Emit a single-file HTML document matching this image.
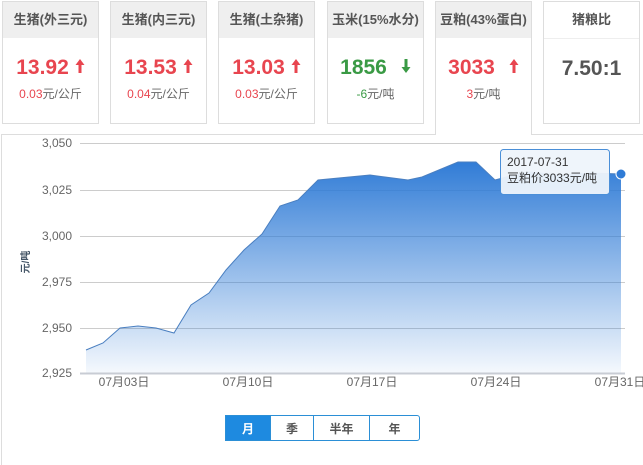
<!DOCTYPE html><html><head><meta charset="utf-8"><style>
body{margin:0;width:643px;height:450px;background:#fff;font-family:"Liberation Sans","Noto Sans CJK SC",sans-serif;position:relative;overflow:hidden}
.c{position:absolute;top:1px;width:97px;height:123px;border:1px solid #ddd;background:#fff;text-align:center;box-sizing:border-box}
.c .h{background:#efefef;height:36px;line-height:36px;font-size:13px;font-weight:bold;color:#555}
.c .v{margin-top:18px;font-size:21px;font-weight:bold;height:24px;line-height:24px}
.c .s{font-size:12px;color:#666;margin-top:5px}
.r{color:#e8454f}.g{color:#3a9a45}
.ar{display:inline-block;vertical-align:middle;margin-left:6px;margin-top:-4px}
.btn{position:absolute;top:415px;height:26px;line-height:26px;text-align:center;font-size:12px;font-weight:bold;color:#555;border:1px solid #2b8fd6;box-sizing:border-box}
</style></head><body>
<div class="c" style="left:2px"><div class="h">生猪(外三元)</div><div class="v r">13.92<svg class="ar" width="10" height="16"><path d="M5 1L0.5 7H3.5V15H6.5V7H9.5Z" fill="#e8454f"/></svg></div><div class="s"><span class="r">0.03</span>元/公斤</div></div>
<div class="c" style="left:110px"><div class="h">生猪(内三元)</div><div class="v r">13.53<svg class="ar" width="10" height="16"><path d="M5 1L0.5 7H3.5V15H6.5V7H9.5Z" fill="#e8454f"/></svg></div><div class="s"><span class="r">0.04</span>元/公斤</div></div>
<div class="c" style="left:218px"><div class="h">生猪(土杂猪)</div><div class="v r">13.03<svg class="ar" width="10" height="16"><path d="M5 1L0.5 7H3.5V15H6.5V7H9.5Z" fill="#e8454f"/></svg></div><div class="s"><span class="r">0.03</span>元/公斤</div></div>
<div class="c" style="left:327px"><div class="h">玉米(15%水分)</div><div class="v g">1856<svg class="ar" style="margin-left:14px" width="10" height="16"><path d="M5 15L0.5 9H3.5V1H6.5V9H9.5Z" fill="#3a9a45"/></svg></div><div class="s"><span class="g">-6</span>元/吨</div></div>
<div class="c" style="left:435px;height:134px;border-bottom:none"><div class="h">豆粕(43%蛋白)</div><div class="v r">3033<svg class="ar" style="margin-left:14px" width="10" height="16"><path d="M5 1L0.5 7H3.5V15H6.5V7H9.5Z" fill="#e8454f"/></svg></div><div class="s"><span class="r">3</span>元/吨</div></div>
<div class="c" style="left:543px"><div class="h" style="background:#fff;border-bottom:1px solid #eee">猪粮比</div><div class="v" style="color:#555">7.50:1</div></div>
<div style="position:absolute;left:1px;top:134px;width:434px;height:330px;border-top:1px solid #ddd;border-left:1px solid #ddd"></div>
<div style="position:absolute;left:532px;top:134px;width:111px;border-top:1px solid #ddd"></div>
<svg style="position:absolute;left:0;top:0" width="643" height="450">
<defs><linearGradient id="gr" x1="0" y1="160" x2="0" y2="375" gradientUnits="userSpaceOnUse"><stop offset="0" stop-color="#2f7bd6"/><stop offset="1" stop-color="#2f7bd6" stop-opacity="0.04"/></linearGradient></defs>
<g stroke="#ccc" stroke-width="1">
<line x1="80" x2="625" y1="143.5" y2="143.5"/><line x1="80" x2="625" y1="190.5" y2="190.5"/><line x1="80" x2="625" y1="236.5" y2="236.5"/><line x1="80" x2="625" y1="282.5" y2="282.5"/><line x1="80" x2="625" y1="328.5" y2="328.5"/></g>
<path d="M86,350 L103,343 L120,328 L138,326 L156,328 L174,333 L191,305 L209,293 L226,270 L244,250 L262,234 L280,206 L298,200 L318,180 L370,175 L385,177 L408,180 L422,177 L458,162 L476,162 L495,180 L510,176 L530,172 L560,175 L590,173 L621,174 L621,373 L86,373Z" fill="url(#gr)" stroke="none"/>
<path d="M86,350 L103,343 L120,328 L138,326 L156,328 L174,333 L191,305 L209,293 L226,270 L244,250 L262,234 L280,206 L298,200 L318,180 L370,175 L385,177 L408,180 L422,177 L458,162 L476,162 L495,180 L510,176 L530,172 L560,175 L590,173 L621,174" fill="none" stroke="#4a7fc0" stroke-width="1"/>
<line x1="80" x2="625" y1="373.5" y2="373.5" stroke="#c8ccd4" stroke-width="2"/>
<circle cx="621" cy="174" r="5" fill="#2f7bd6" stroke="#fff" stroke-width="1"/>
<g font-size="12" fill="#666" text-anchor="end"><text x="72" y="147">3,050</text><text x="72" y="194">3,025</text><text x="72" y="240">3,000</text><text x="72" y="286">2,975</text><text x="72" y="332">2,950</text><text x="72" y="377">2,925</text></g>
<g font-size="12" fill="#666" text-anchor="middle"><text x="124" y="386">07月03日</text><text x="248" y="386">07月10日</text><text x="372" y="386">07月17日</text><text x="496" y="386">07月24日</text><text x="620" y="386">07月31日</text></g>
<text transform="translate(29,262) rotate(-90)" font-size="10" fill="#456" font-weight="bold" text-anchor="middle">元/吨</text>
<rect x="500.5" y="149.5" width="109" height="45" rx="3" fill="#eef4fb" fill-opacity="0.95" stroke="#4a8fd8"/>
<text x="507" y="166" font-size="12" fill="#333">2017-07-31</text><text x="507" y="182" font-size="12" fill="#333">豆粕价3033元/吨</text>
</svg>
<div class="btn" style="left:225px;width:46px;background:#1e8ae0;color:#fff">月</div>
<div class="btn" style="left:270px;width:44px">季</div>
<div class="btn" style="left:313px;width:57px">半年</div>
<div class="btn" style="left:369px;width:51px;border-radius:0 3px 3px 0">年</div>
</body></html>
